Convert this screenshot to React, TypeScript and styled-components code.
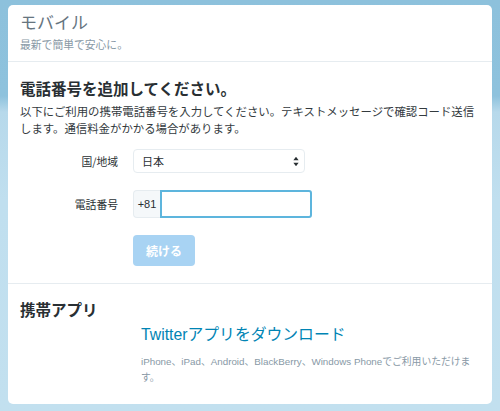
import styled, { createGlobalStyle } from 'styled-components'

const Global = createGlobalStyle`
  html, body {
    margin: 0;
    padding: 0;
  }
  body {
    background: linear-gradient(180deg, #8dc1dc 0px, #8ec2dd 96px, #b7d9eb 112px, #c0dfef 200px, #c2e0ef 411px);
    font-family: "Noto Sans CJK JP", "Liberation Sans", sans-serif;
    height: 411px;
    overflow: hidden;
  }
`

const latin = `"Liberation Sans", "Noto Sans CJK JP", sans-serif`

const Card = styled.div`
  margin: 5px 8px 0;
  background: #ffffff;
  border-radius: 5px;
  height: 399px;
  box-sizing: border-box;
  overflow: hidden;
`

const Header = styled.div`
  padding: 6px 12px 8px;
  border-bottom: 1px solid #e6ecf0;

  h1 {
    margin: 0;
    font-size: 17px;
    line-height: 22px;
    font-weight: 400;
    color: #66757f;
  }
  p {
    margin: 2px 0 0;
    font-size: 10.8px;
    line-height: 18px;
    color: #8899a6;
  }
`

const Section = styled.div<{ $top: number; $last?: boolean }>`
  padding: ${p => p.$top}px 12px 17px;
  border-bottom: ${p => (p.$last ? 'none' : '1px solid #e6ecf0')};

  h2 {
    margin: 0;
    font-size: 15.5px;
    line-height: 22px;
    font-weight: 700;
    color: #292f33;
  }
`

const Lead = styled.p`
  margin: 4px 0 0;
  font-size: 11.4px;
  line-height: 17px;
  color: #333a3e;
`

const Row = styled.div<{ $top: number }>`
  display: grid;
  grid-template-columns: 98px 1fr;
  column-gap: 15px;
  align-items: center;
  margin-top: ${p => p.$top}px;
`

const Label = styled.span`
  text-align: right;
  font-size: 10.8px;
  color: #292f33;
`

const Select = styled.div`
  width: 172px;
  height: 24px;
  box-sizing: border-box;
  border: 1px solid #e6ecf0;
  border-radius: 4px;
  padding: 0 5px 0 8px;
  display: flex;
  align-items: center;
  justify-content: space-between;
  font-size: 11px;
  color: #292f33;
`

const Phone = styled.div`
  display: flex;
  height: 28px;
`

const Prefix = styled.span`
  width: 27px;
  box-sizing: border-box;
  background: #f5f8fa;
  border: 1px solid #e6ecf0;
  border-right: none;
  border-radius: 4px 0 0 4px;
  display: flex;
  align-items: center;
  justify-content: center;
  font-family: ${latin};
  font-size: 11px;
  color: #292f33;
`

const Input = styled.input`
  width: 152px;
  height: 28px;
  box-sizing: border-box;
  border: 2px solid #5db5dd;
  border-radius: 0 3px 3px 0;
  outline: none;
  padding: 0 6px;
  font-size: 12px;
`

const Button = styled.button`
  width: 62px;
  height: 31px;
  border: none;
  border-radius: 4px;
  background: #a8d3f3;
  color: #ffffff;
  font-family: inherit;
  font-size: 12px;
  font-weight: 700;
  padding: 0;
`

const AppBlock = styled.div`
  margin: 5px 0 0 121px;
  font-family: ${latin};

  a {
    display: block;
    height: 20px;
    font-size: 15.8px;
    line-height: 20px;
    color: #0084b4;
    text-decoration: none;
  }
  p {
    margin: 9px 0 0;
    font-size: 9.8px;
    line-height: 16px;
    color: #8899a6;
    padding-right: 4px;
  }
`

function Arrows() {
  return (
    <svg width="6" height="11" viewBox="0 0 6 11">
      <path d="M3 0.8 L5.6 4.3 H0.4 Z" fill="#292f33" />
      <path d="M3 10.2 L5.6 6.7 H0.4 Z" fill="#292f33" />
    </svg>
  )
}

export default function App() {
  return (
    <>
      <Global />
      <Card>
        <Header>
          <h1>モバイル</h1>
          <p>最新で簡単で安心に。</p>
        </Header>
        <Section $top={15}>
          <h2>電話番号を追加してください。</h2>
          <Lead>
            以下にご利用の携帯電話番号を入力してください。テキストメッセージで確認コード送信します。通信料金がかかる場合があります。
          </Lead>
          <Row $top={12}>
            <Label>国/地域</Label>
            <Select>
              <span>日本</span>
              <Arrows />
            </Select>
          </Row>
          <Row $top={17}>
            <Label>電話番号</Label>
            <Phone>
              <Prefix>+81</Prefix>
              <Input type="tel" />
            </Phone>
          </Row>
          <Row $top={17}>
            <span />
            <div>
              <Button type="button">続ける</Button>
            </div>
          </Row>
        </Section>
        <Section $top={14} $last>
          <h2>携帯アプリ</h2>
          <AppBlock>
            <a href="#">Twitterアプリをダウンロード</a>
            <p>iPhone、iPad、Android、BlackBerry、Windows Phoneでご利用いただけます。</p>
          </AppBlock>
        </Section>
      </Card>
    </>
  )
}
